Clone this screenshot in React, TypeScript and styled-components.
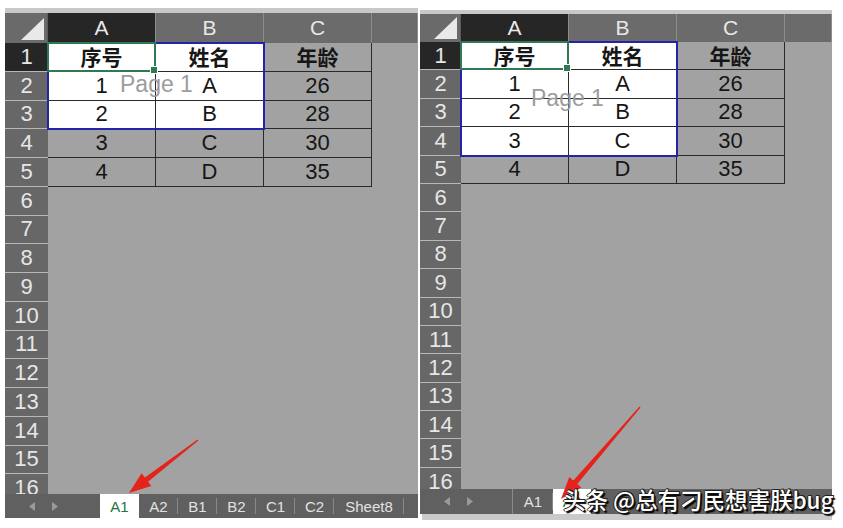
import React from 'react';
import styled, { createGlobalStyle } from 'styled-components';

const GlobalStyle = createGlobalStyle`
  html, body {
    margin: 0;
    padding: 0;
    background: #ffffff;
  }
  * {
    box-sizing: border-box;
  }
`;

const FONT = `"Liberation Sans", "Noto Sans CJK SC", Arial, sans-serif`;

const Page = styled.div`
  position: relative;
  width: 843px;
  height: 528px;
  overflow: hidden;
  display: flex;
  align-items: flex-start;
  background: #ffffff;
  font-family: ${FONT};
`;

const SheetFrame = styled.div<{ $w: number; $ml: number; $mt: number }>`
  width: ${(p) => p.$w}px;
  margin-left: ${(p) => p.$ml}px;
  margin-top: ${(p) => p.$mt}px;
  display: flex;
  flex-direction: column;
`;

const TopStrip = styled.div<{ $h: number }>`
  height: ${(p) => p.$h}px;
  background: #c8c8c8;
`;

const GridArea = styled.div<{ $h: number }>`
  position: relative;
  height: ${(p) => p.$h}px;
  overflow: hidden;
  background: #a2a2a2;
`;

const Grid = styled.div<{ $cols: string; $headH: number; $rowH: number }>`
  display: grid;
  grid-template-columns: ${(p) => p.$cols};
  grid-template-rows: ${(p) => p.$headH}px repeat(16, ${(p) => p.$rowH}px);
`;

const Corner = styled.div`
  background: #6a6a6a;
  display: flex;
  align-items: flex-end;
  justify-content: flex-end;
  padding: 0 3px 3px 0;
  border-right: 1px solid #5a5a5a;
`;

const ColHead = styled.div<{ $active?: boolean }>`
  display: flex;
  align-items: center;
  justify-content: center;
  background: ${(p) => (p.$active ? '#262626' : '#6b6b6b')};
  border-right: 1px solid #8c8c8c;
  color: #e8e8e8;
  font-size: 21px;
`;

const RowHead = styled.div<{ $active?: boolean }>`
  display: flex;
  align-items: center;
  justify-content: center;
  background: ${(p) => (p.$active ? '#262626' : '#676767')};
  border-bottom: 1px solid #b8b8b8;
  color: #e6e6e6;
  font-size: 22px;
`;

const Cell = styled.div<{ $table?: boolean; $selected?: boolean; $bold?: boolean }>`
  display: flex;
  align-items: center;
  justify-content: center;
  background: ${(p) => (p.$selected ? '#ffffff' : 'transparent')};
  border-right: ${(p) => (p.$table ? '1px solid #2a2a2a' : 'none')};
  border-bottom: ${(p) => (p.$table ? '1px solid #2a2a2a' : 'none')};
  color: #161616;
  font-size: ${(p) => (p.$bold ? 21 : 22)}px;
  font-weight: ${(p) => (p.$bold ? 700 : 400)};
  font-family: ${(p) => (p.$bold ? `"Noto Sans CJK SC", sans-serif` : FONT)};
  line-height: 1;
`;

const Selection = styled.div<{ $left: number; $top: number; $w: number; $h: number }>`
  position: absolute;
  left: ${(p) => p.$left - 1}px;
  top: ${(p) => p.$top - 1}px;
  width: ${(p) => p.$w + 2}px;
  height: ${(p) => p.$h + 2}px;
  border: 2px solid #2424a6;
  pointer-events: none;
`;

const ActiveCell = styled.div<{ $left: number; $top: number; $w: number; $h: number }>`
  position: absolute;
  left: ${(p) => p.$left - 1}px;
  top: ${(p) => p.$top - 1}px;
  width: ${(p) => p.$w + 1}px;
  height: ${(p) => p.$h + 1}px;
  border: 2px solid #2f7a55;
  pointer-events: none;

  &::after {
    content: '';
    position: absolute;
    right: -4px;
    bottom: -4px;
    width: 6px;
    height: 6px;
    background: #2f7a55;
    border: 1px solid #ffffff;
  }
`;

const PageLabel = styled.div<{ $left: number; $top: number }>`
  position: absolute;
  left: ${(p) => p.$left}px;
  top: ${(p) => p.$top}px;
  color: #9c9c9c;
  font-size: 23px;
  line-height: 26px;
  pointer-events: none;
`;

const TabBar = styled.div<{ $h: number }>`
  height: ${(p) => p.$h}px;
  display: flex;
  align-items: stretch;
  background: #606060;
`;

const NavArrows = styled.div<{ $w: number }>`
  width: ${(p) => p.$w}px;
  display: flex;
  align-items: center;
  padding-left: 24px;
  gap: 17px;
`;

const TabList = styled.div<{ $divider?: boolean }>`
  display: flex;
  align-items: stretch;
  border-left: ${(p) => (p.$divider ? '1px solid #8a8a8a' : 'none')};
`;

const Tab = styled.div<{ $active?: boolean; $w: number }>`
  position: relative;
  width: ${(p) => p.$w}px;
  display: flex;
  align-items: center;
  justify-content: center;
  background: ${(p) => (p.$active ? '#ffffff' : 'transparent')};
  color: ${(p) => (p.$active ? '#217346' : '#e2e2e2')};
  font-size: 15px;

  &::after {
    content: '';
    position: absolute;
    right: 0;
    top: 4px;
    bottom: 4px;
    width: 1px;
    background: ${(p) => (p.$active ? 'transparent' : '#888888')};
  }
`;

const BottomStrip = styled.div`
  height: 6px;
  margin-left: 2px;
  background: #cacaca;
`;

const Overlay = styled.svg`
  position: absolute;
  left: 0;
  top: 0;
  pointer-events: none;
`;

const Watermark = styled.div`
  position: absolute;
  left: 563px;
  top: 485px;
  color: #ffffff;
  font-family: "Noto Sans CJK SC", sans-serif;
  font-size: 22.5px;
  font-weight: 500;
  line-height: 28px;
  white-space: nowrap;
  text-shadow: 1px 1px 0 #111, -1px 0 0 #222, 0 -1px 0 #222, 1px -1px 0 #222,
    2px 2px 1px #000;
  pointer-events: none;
`;

const TABLE = [
  ['序号', '姓名', '年龄'],
  ['1', 'A', '26'],
  ['2', 'B', '28'],
  ['3', 'C', '30'],
  ['4', 'D', '35'],
];

function NavArrow({ dir }: { dir: 'left' | 'right' }) {
  return (
    <svg width="6" height="9" viewBox="0 0 6 9">
      {dir === 'left' ? (
        <polygon points="6,0 0,4.5 6,9" fill="#9a9a9a" />
      ) : (
        <polygon points="0,0 6,4.5 0,9" fill="#9a9a9a" />
      )}
    </svg>
  );
}

type TabDef = { name: string; w: number; active?: boolean };

type SheetProps = {
  w: number;
  ml: number;
  mt: number;
  strip: number;
  areaH: number;
  headW: number;
  dW: number;
  headH: number;
  rowH: number;
  selRows: number;
  page: { left: number; top: number };
  navW: number;
  tabs: TabDef[];
  tabH: number;
  divider?: boolean;
  bottomStrip?: boolean;
};

function Sheet(props: SheetProps) {
  const { headW, headH, rowH, selRows } = props;
  const colW = 108;
  const cols = `${headW}px ${colW}px ${colW}px ${colW}px ${props.dW}px`;
  const rows = Array.from({ length: 16 }, (_, i) => i + 1);

  return (
    <SheetFrame $w={props.w} $ml={props.ml} $mt={props.mt}>
      <TopStrip $h={props.strip} />
      <GridArea $h={props.areaH}>
        <Grid $cols={cols} $headH={headH} $rowH={rowH}>
          <Corner>
            <svg width="23" height="22" viewBox="0 0 23 22">
              <polygon points="23,0 23,22 0,22" fill="#e9e9e9" />
            </svg>
          </Corner>
          <ColHead $active>A</ColHead>
          <ColHead>B</ColHead>
          <ColHead>C</ColHead>
          <ColHead />
          {rows.map((r) => (
            <React.Fragment key={r}>
              <RowHead $active={r === 1}>{r}</RowHead>
              {[0, 1, 2].map((c) => {
                const value = TABLE[r - 1]?.[c];
                return (
                  <Cell
                    key={c}
                    $table={r <= 5}
                    $selected={c < 2 && r <= selRows}
                    $bold={r === 1}
                  >
                    {value}
                  </Cell>
                );
              })}
              <Cell />
            </React.Fragment>
          ))}
        </Grid>
        <Selection $left={headW} $top={headH} $w={colW * 2} $h={rowH * selRows} />
        <ActiveCell $left={headW} $top={headH} $w={colW} $h={rowH} />
        <PageLabel $left={props.page.left} $top={props.page.top}>
          Page 1
        </PageLabel>
      </GridArea>
      <TabBar $h={props.tabH}>
        <NavArrows $w={props.navW}>
          <NavArrow dir="left" />
          <NavArrow dir="right" />
        </NavArrows>
        <TabList $divider={props.divider}>
          {props.tabs.map((t) => (
            <Tab key={t.name} $w={t.w} $active={t.active}>
              {t.name}
            </Tab>
          ))}
        </TabList>
      </TabBar>
      {props.bottomStrip && <BottomStrip />}
    </SheetFrame>
  );
}

function arrowPoints(tx: number, ty: number, hx: number, hy: number) {
  const dx = hx - tx;
  const dy = hy - ty;
  const len = Math.hypot(dx, dy);
  const ux = dx / len;
  const uy = dy / len;
  const px = -uy;
  const py = ux;
  const headLen = 22;
  const headW = 8;
  const w0 = 0.6;
  const w1 = 2.6;
  const bx = hx - ux * headLen;
  const by = hy - uy * headLen;
  const pts = [
    [tx + px * w0, ty + py * w0],
    [bx + px * w1, by + py * w1],
    [bx + px * headW, by + py * headW],
    [hx, hy],
    [bx - px * headW, by - py * headW],
    [bx - px * w1, by - py * w1],
    [tx - px * w0, ty - py * w0],
  ];
  return pts.map((p) => p.map((v) => v.toFixed(1)).join(',')).join(' ');
}

const LEFT_TABS: TabDef[] = [
  { name: 'A1', w: 39, active: true },
  { name: 'A2', w: 39 },
  { name: 'B1', w: 39 },
  { name: 'B2', w: 39 },
  { name: 'C1', w: 39 },
  { name: 'C2', w: 39 },
  { name: 'Sheet8', w: 70 },
];

const RIGHT_TABS: TabDef[] = [
  { name: 'A1', w: 40 },
  { name: 'A2', w: 38, active: true },
];

export default function App() {
  return (
    <>
      <GlobalStyle />
      <Page>
        <Sheet
          w={413}
          ml={5}
          mt={8}
          strip={5}
          areaH={481}
          headW={43}
          dW={46}
          headH={30}
          rowH={28.75}
          selRows={3}
          page={{ left: 115, top: 58 }}
          navW={95}
          tabs={LEFT_TABS}
          tabH={24}
        />
        <Sheet
          w={412}
          ml={2}
          mt={10}
          strip={4}
          areaH={475}
          headW={41}
          dW={47}
          headH={28}
          rowH={28.4}
          selRows={4}
          page={{ left: 111, top: 71 }}
          navW={92}
          tabs={RIGHT_TABS}
          tabH={25}
          divider
          bottomStrip
        />
        <Overlay width="843" height="528" viewBox="0 0 843 528">
          <polygon points={arrowPoints(198, 440, 129, 493)} fill="#e5231b" />
          <polygon points={arrowPoints(640, 407, 561, 499)} fill="#e5231b" />
        </Overlay>
        <Watermark>头条 @总有刁民想害朕bug</Watermark>
      </Page>
    </>
  );
}
